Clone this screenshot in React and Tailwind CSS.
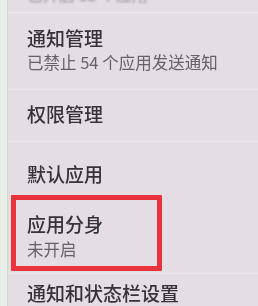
export default function App() {
  const font = { fontFamily: '"Noto Sans CJK SC", "Noto Sans", sans-serif' };

  return (
    <div
      className="w-[258px] h-[306px] overflow-hidden flex bg-[#e4dde3] text-[#353338]"
      style={font}
    >
      {/* phone edge */}
      <div className="w-[8px] h-full bg-[#ebeee8] border-r border-[#cfdcc8]" />

      <div className="flex-1 flex flex-col">
        {/* row above, mostly scrolled out of view */}
        <div className="h-[13px] overflow-hidden border-b border-[#eee9ee] pl-[19px]">
          <div className="-mt-[15px] text-[16px] leading-[19px] text-[#9a969c] blur-[0.8px]">
            已开启 12 个应用
          </div>
        </div>

        {/* 通知管理 */}
        <div className="pl-[19px] pt-[14px] pb-[17px] border-b border-[#ece7ec] blur-[0.3px]">
          <div className="text-[19px] leading-[22px] font-medium">通知管理</div>
          <div className="mt-[4px] text-[16.5px] leading-[19px] text-[#66626a]">
            已禁止 54 个应用发送通知
          </div>
        </div>

        {/* 权限管理 */}
        <div className="pl-[19px] pt-[13px] pb-[16px] border-b border-[#ece7ec] blur-[0.3px]">
          <div className="text-[19px] leading-[22px] font-medium">权限管理</div>
        </div>

        {/* 默认应用 */}
        <div className="pl-[19px] pt-[21px] pb-[10px] blur-[0.3px]">
          <div className="text-[19px] leading-[22px] font-medium">默认应用</div>
        </div>

        {/* 应用分身 (highlighted) */}
        <div className="ml-[3px] w-[151px] h-[76px] border-[5px] border-[#e8333c] rounded-[1px] pl-[11px] pt-[13px]">
          <div className="blur-[0.3px]">
            <div className="text-[19px] leading-[22px] font-medium">应用分身</div>
            <div className="mt-[5px] text-[16.5px] leading-[19px] text-[#66626a]">未开启</div>
          </div>
        </div>

        <div className="border-b border-[#ece7ec] mt-[2px]" />

        {/* 通知和状态栏设置 */}
        <div className="pl-[19px] pt-[8px] blur-[0.3px]">
          <div className="text-[19px] leading-[22px] font-medium whitespace-nowrap">通知和状态栏设置</div>
        </div>
      </div>
    </div>
  );
}
